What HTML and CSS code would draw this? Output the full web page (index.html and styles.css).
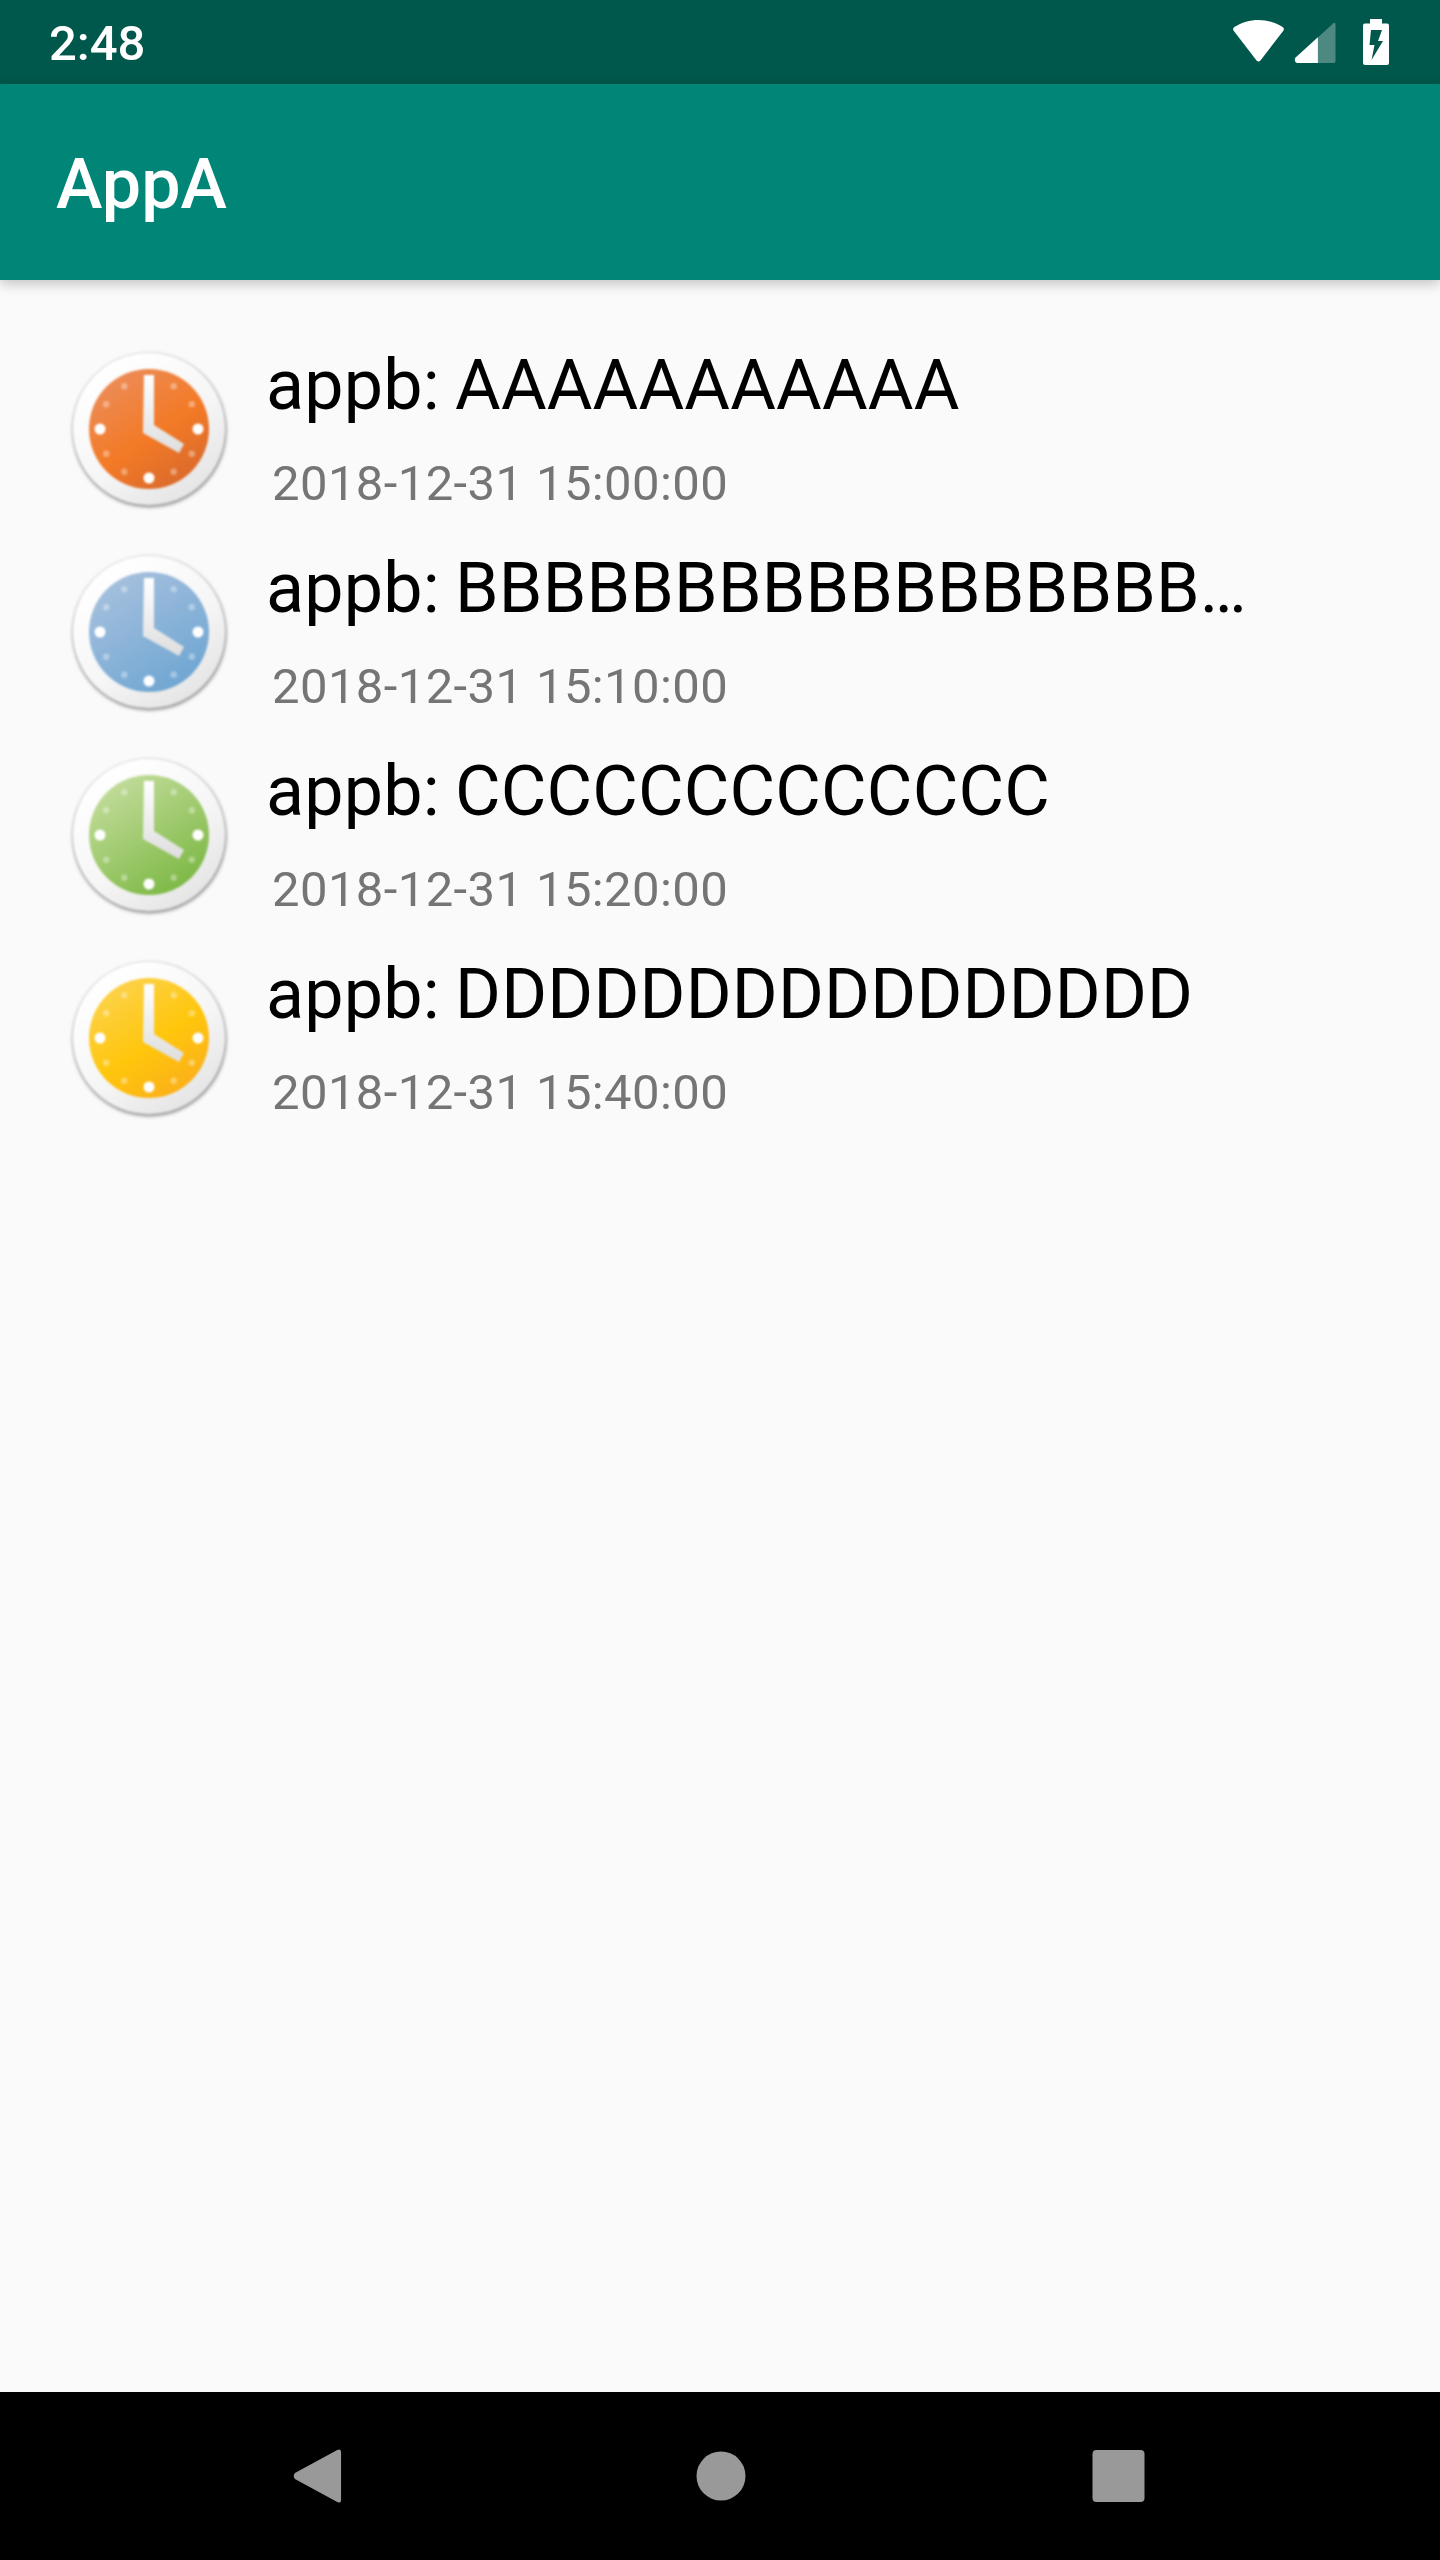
FILE: index.html
```html
<!DOCTYPE html>
<html lang="en">
<head>
<meta charset="utf-8">
<title>AppA</title>
<link rel="stylesheet" href="styles.css">
</head>
<body>
<svg class="defs" width="0" height="0" aria-hidden="true">
  <defs>
    <linearGradient id="ring" x1="0.2" y1="0.1" x2="0.8" y2="0.95">
      <stop offset="0" stop-color="#ffffff"/><stop offset="0.55" stop-color="#f6f6f6"/><stop offset="1" stop-color="#e4e4e4"/>
    </linearGradient>
    <linearGradient id="hand" x1="0" y1="0" x2="0" y2="1">
      <stop offset="0" stop-color="#ffffff"/><stop offset="1" stop-color="#dedede"/>
    </linearGradient>
    <linearGradient id="f-orange" x1="0.2" y1="0.05" x2="0.8" y2="0.95">
      <stop offset="0" stop-color="#ec8c58"/><stop offset="0.55" stop-color="#f37a26"/><stop offset="1" stop-color="#da6a2c"/>
    </linearGradient>
    <linearGradient id="f-blue" x1="0.2" y1="0.05" x2="0.8" y2="0.95">
      <stop offset="0" stop-color="#a6c0de"/><stop offset="1" stop-color="#6ea6d2"/>
    </linearGradient>
    <linearGradient id="f-green" x1="0.2" y1="0.05" x2="0.8" y2="0.95">
      <stop offset="0" stop-color="#c2dc9a"/><stop offset="1" stop-color="#7cb844"/>
    </linearGradient>
    <linearGradient id="f-yellow" x1="0.2" y1="0.05" x2="0.8" y2="0.95">
      <stop offset="0" stop-color="#fcd24a"/><stop offset="0.55" stop-color="#ffc60c"/><stop offset="1" stop-color="#fbaf1a"/>
    </linearGradient>
    <filter id="soft" x="-20%" y="-20%" width="140%" height="140%"><feGaussianBlur stdDeviation="1.4"/></filter>
    <g id="dial">
      <g fill="#fff">
        <circle cx="0" cy="49" r="5.500"/><circle cx="49" cy="0" r="5.500"/><circle cx="-49" cy="0" r="5.500"/>
      </g>
      <g fill="#fff" opacity="0.35">
        <circle cx="24.700" cy="-42.800" r="3.200"/><circle cx="42.800" cy="-24.700" r="3.200"/>
        <circle cx="42.800" cy="24.700" r="3.200"/><circle cx="24.700" cy="42.800" r="3.200"/>
        <circle cx="-24.700" cy="42.800" r="3.200"/><circle cx="-42.800" cy="24.700" r="3.200"/>
        <circle cx="-42.800" cy="-24.700" r="3.200"/><circle cx="-24.700" cy="-42.800" r="3.200"/>
      </g>
      <path d="M-5 -54H5V-4L35 15L30 24L-6 4Z" fill="url(#hand)"/>
    </g>
  </defs>
</svg>

<header class="status-bar">
  <span class="clock-text">2:48</span>
  <div class="status-icons">
    <svg class="ic-wifi" width="53" height="43" viewBox="0 0 54 44"><path d="M1 10.500Q1 9 2.300 8.200C17 -1.500 37 -1.500 51.700 8.200Q53 9 53 10.500Q53 11.300 52.400 12L29 42.500Q27 44.500 25 42.500L1.600 12Q1 11.300 1 10.500Z" fill="#fff"/></svg>
    <svg class="ic-signal" width="42" height="42" viewBox="0 0 44 44"><path d="M1.500 37.500L41 1.500Q43.500 -0.500 43.500 3V41Q43.500 43 41 43H3Q-0.500 41 1.500 37.500Z" fill="#fff" fill-opacity="0.3"/><path d="M1.500 37.500L25 16V43H3Q-0.500 41 1.500 37.500Z" fill="#fff"/></svg>
    <svg class="ic-battery" width="26" height="46" viewBox="0 0 26 46"><path d="M7 0H19V4.500H24Q26 4.500 26 6.500V44Q26 46 24 46H2Q0 46 0 44V6.500Q0 4.500 2 4.500H7Z" fill="#fff"/><path d="M8 11H19L15 22H20L8.500 41L11.500 26H6.500Z" fill="#00574b"/></svg>
  </div>
</header>

<div class="app-bar"><h1 class="app-title">AppA</h1></div>

<main class="list">
  <article class="row">
    <svg class="clock" width="176" height="176" viewBox="-88 -88 176 176"><circle cx="0.500" cy="1.500" r="77" fill="#999" filter="url(#soft)"/><circle r="76" fill="url(#ring)"/><circle r="60" fill="url(#f-orange)"/><use href="#dial"/></svg>
    <div class="text"><div class="title">appb: AAAAAAAAAAA</div><div class="date">2018-12-31 15:00:00</div></div>
  </article>
  <article class="row">
    <svg class="clock" width="176" height="176" viewBox="-88 -88 176 176"><circle cx="0.500" cy="1.500" r="77" fill="#999" filter="url(#soft)"/><circle r="76" fill="url(#ring)"/><circle r="60" fill="url(#f-blue)"/><use href="#dial"/></svg>
    <div class="text"><div class="title">appb: BBBBBBBBBBBBBBBBB…</div><div class="date">2018-12-31 15:10:00</div></div>
  </article>
  <article class="row">
    <svg class="clock" width="176" height="176" viewBox="-88 -88 176 176"><circle cx="0.500" cy="1.500" r="77" fill="#999" filter="url(#soft)"/><circle r="76" fill="url(#ring)"/><circle r="60" fill="url(#f-green)"/><use href="#dial"/></svg>
    <div class="text"><div class="title">appb: CCCCCCCCCCCCC</div><div class="date">2018-12-31 15:20:00</div></div>
  </article>
  <article class="row">
    <svg class="clock" width="176" height="176" viewBox="-88 -88 176 176"><circle cx="0.500" cy="1.500" r="77" fill="#999" filter="url(#soft)"/><circle r="76" fill="url(#ring)"/><circle r="60" fill="url(#f-yellow)"/><use href="#dial"/></svg>
    <div class="text"><div class="title">appb: DDDDDDDDDDDDDDDD</div><div class="date">2018-12-31 15:40:00</div></div>
  </article>
</main>

<nav class="nav-bar">
  <svg class="nav-back" width="50" height="58" viewBox="0 0 52 58"><path d="M2 32Q-0.500 29 2 26L46 2Q50 0 50 4V54Q50 58 46 56Z" fill="#999"/></svg>
  <svg class="nav-home" width="50" height="50" viewBox="0 0 50 50"><circle cx="25" cy="25" r="24.500" fill="#999"/></svg>
  <svg class="nav-recent" width="53" height="54" viewBox="0 0 54 54"><rect x="0.500" y="0.500" width="53" height="53" rx="4" fill="#999"/></svg>
</nav>
</body>
</html>
```

FILE: styles.css
```css
* { box-sizing: border-box; }
html, body { margin: 0; padding: 0; }
body {
  width: 1440px;
  height: 2560px;
  display: flex;
  flex-direction: column;
  background: #fafafa;
  font-family: Roboto, "Liberation Sans", sans-serif;
  overflow: hidden;
}
.defs { position: absolute; }
.status-bar {
  height: 84px;
  flex: none;
  background: #00574b;
  display: flex;
  align-items: center;
  justify-content: space-between;
  padding: 0 51px 0 49px;
}
.clock-text { color: #fff; font-size: 49px; font-weight: 500; line-height: 80px; padding-top: 4px; }
.status-icons { display: flex; align-items: flex-start; }
.ic-wifi { margin-right: 9px; }
.ic-signal { margin: 3px 27px 0 0; }
.app-bar {
  height: 196px;
  flex: none;
  background: #008577;
  padding: 4px 0 0 56px;
  display: flex;
  align-items: center;
  box-shadow: 0 4px 12px rgba(0, 0, 0, 0.22);
  position: relative;
}
.app-title { margin: 0; color: #fff; font-size: 70px; font-weight: 500; line-height: 82px; }
.list { flex: 1; padding-top: 48px; }
.row { height: 203px; display: flex; align-items: flex-start; padding-left: 61px; }
.clock { flex: none; margin-top: 13px; filter: blur(1px); }
.text { margin-left: 29px; padding-top: 16px; }
.title { font-size: 70px; line-height: 82px; color: #000; white-space: nowrap; letter-spacing: 0.2px; word-spacing: -2.5px; }
.date { margin: 29px 0 0 6px; font-size: 49px; line-height: 57px; color: #757575; letter-spacing: 0.4px; }
.nav-bar {
  height: 168px;
  flex: none;
  background: #000;
  display: flex;
  align-items: center;
  padding-left: 293px;
}
.nav-back { margin-right: 353px; }
.nav-home { margin-right: 346px; }
```
